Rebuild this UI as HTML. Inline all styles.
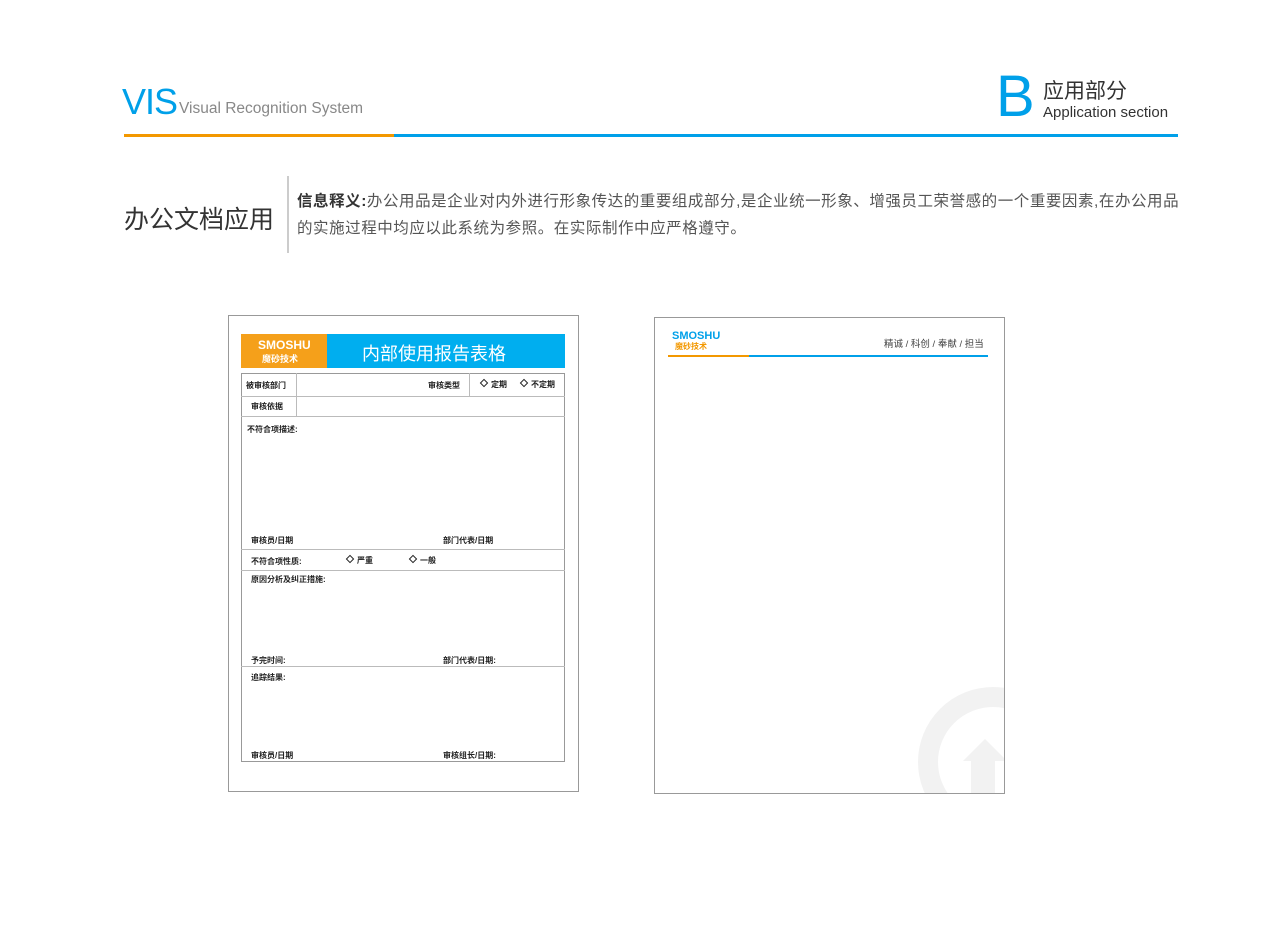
<!DOCTYPE html>
<html><head><meta charset="utf-8"><style>
*{margin:0;padding:0;box-sizing:border-box}
body{width:1280px;height:943px;background:#fff;position:relative;overflow:hidden;font-family:"Liberation Sans","Noto Sans CJK SC",sans-serif;color:#333}
.a{position:absolute;white-space:nowrap}
.s{font-size:8px;color:#222;font-weight:bold}
.hl{position:absolute;height:1px;background:#bbb}
.vl{position:absolute;width:1px;background:#bbb}
.d{display:inline-block;width:6px;height:6px;border:1px solid #222;transform:rotate(45deg);margin-right:4px;vertical-align:1px}
</style></head><body>
<div class="a" style="left:122px;top:80px;font-size:36px;color:#00a0e9;letter-spacing:-1px;line-height:44px">VIS</div>
<div class="a" style="left:179px;top:100px;font-size:15.5px;color:#888">Visual Recognition System</div>
<div class="a" style="left:124px;top:134px;width:270px;height:3px;background:#f39800"></div>
<div class="a" style="left:394px;top:134px;width:784px;height:3px;background:#00a0e9"></div>
<div class="a" style="left:996px;top:66px;font-size:58px;color:#00a0e9;line-height:62px">B</div>
<div class="a" style="left:1043px;top:75px;font-size:21px;color:#333">应用部分</div>
<div class="a" style="left:1043px;top:104px;font-size:15px;color:#333">Application section</div>
<div class="a" style="left:124px;top:200px;font-size:25px;color:#333">办公文档应用</div>
<div class="a" style="left:287px;top:176px;width:2px;height:77px;background:#ccc"></div>
<div class="a" style="left:297px;top:188px;font-size:15.5px;line-height:27px;color:#555;letter-spacing:0.55px"><b style="color:#333">信息释义:</b>办公用品是企业对内外进行形象传达的重要组成部分,是企业统一形象、增强员工荣誉感的一个重要因素,在办公用品<br>的实施过程中均应以此系统为参照。在实际制作中应严格遵守。</div>

<!-- left doc -->
<div class="a" style="left:228px;top:315px;width:351px;height:477px;border:1px solid #999"></div>
<div class="a" style="left:241px;top:334px;width:86px;height:34px;background:#f5a01a"></div>
<div class="a" style="left:258px;top:338px;font-size:12px;color:#fff;font-weight:bold">SMOSHU</div>
<div class="a" style="left:262px;top:352px;font-size:9px;color:#fff;font-weight:bold">魔砂技术</div>
<div class="a" style="left:327px;top:334px;width:238px;height:34px;background:#00aeef"></div>
<div class="a" style="left:362px;top:340px;font-size:18px;color:#fff">内部使用报告表格</div>
<div class="a" style="left:241px;top:373px;width:324px;height:389px;border:1px solid #999"></div>
<div class="hl" style="left:241px;top:396px;width:324px"></div>
<div class="hl" style="left:241px;top:416px;width:324px"></div>
<div class="hl" style="left:241px;top:549px;width:324px"></div>
<div class="hl" style="left:241px;top:570px;width:324px"></div>
<div class="hl" style="left:241px;top:666px;width:324px"></div>
<div class="vl" style="left:296px;top:373px;height:43px"></div>
<div class="vl" style="left:469px;top:373px;height:23px"></div>
<div class="a s" style="left:246px;top:380px">被审核部门</div>
<div class="a s" style="left:428px;top:380px">审核类型</div>
<div class="a s" style="left:481px;top:379px"><span class="d"></span>定期</div>
<div class="a s" style="left:521px;top:379px"><span class="d"></span>不定期</div>
<div class="a s" style="left:251px;top:401px">审核依据</div>
<div class="a s" style="left:247px;top:424px">不符合项描述:</div>
<div class="a s" style="left:251px;top:535px">审核员/日期</div>
<div class="a s" style="left:443px;top:535px">部门代表/日期</div>
<div class="a s" style="left:251px;top:556px">不符合项性质:</div>
<div class="a s" style="left:347px;top:555px"><span class="d"></span>严重</div>
<div class="a s" style="left:410px;top:555px"><span class="d"></span>一般</div>
<div class="a s" style="left:251px;top:574px">原因分析及纠正措施:</div>
<div class="a s" style="left:251px;top:655px">予完时间:</div>
<div class="a s" style="left:443px;top:655px">部门代表/日期:</div>
<div class="a s" style="left:251px;top:672px">追踪结果:</div>
<div class="a s" style="left:251px;top:750px">审核员/日期</div>
<div class="a s" style="left:443px;top:750px">审核组长/日期:</div>

<!-- right doc -->
<div class="a" style="left:654px;top:317px;width:351px;height:477px;border:1px solid #999;overflow:hidden">
<svg width="351" height="477" style="position:absolute;left:0;top:0">
<circle cx="338" cy="444" r="65" fill="none" stroke="#f2f2f2" stroke-width="20"/>
<polygon points="330,421 352,443 340,443 340,477 316,477 316,443 308,443" fill="#f2f2f2"/>
</svg>
</div>
<div class="a" style="left:672px;top:330px;font-size:11px;color:#00a0e9;font-weight:bold">SMOSHU</div>
<div class="a" style="left:675px;top:341px;font-size:8px;color:#f39800;font-weight:bold">魔砂技术</div>
<div class="a" style="left:884px;top:336px;font-size:9.5px;color:#444">精诚 / 科创 / 奉献 / 担当</div>
<div class="a" style="left:668px;top:355px;width:81px;height:2px;background:#f39800"></div>
<div class="a" style="left:749px;top:355px;width:239px;height:2px;background:#00a0e9"></div>
</body></html>
